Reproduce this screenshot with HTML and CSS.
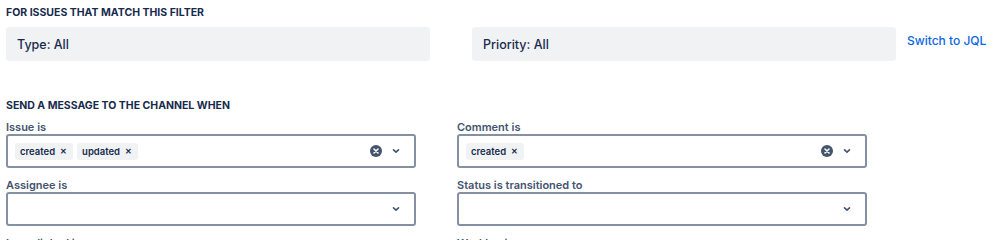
FILE: index.html
```html
<!DOCTYPE html>
<html lang="en">
<head>
    <meta charset="UTF-8">
    <meta name="viewport" content="width=device-width, initial-scale=1.0">
    <title>Channel notifications</title>
    <link rel="stylesheet" href="styles.css">
</head>
<body>
    <!-- Filter section -->
    <h4 class="section-title">For issues that match this filter</h4>
    <div class="filter-row">
        <div class="filter-box">Type: All</div>
        <div class="filter-box">Priority: All</div>
        <a class="jql-link" href="#">Switch to JQL</a>
    </div>

    <!-- Events section -->
    <h4 class="section-title section-gap">Send a message to the channel when</h4>
    <div class="field-grid">
        <div class="field">
            <label>Issue is</label>
            <div class="select">
                <div class="chips">
                    <span class="chip">created <span class="chip-x">&#x2715;</span></span>
                    <span class="chip">updated <span class="chip-x">&#x2715;</span></span>
                </div>
                <span class="clear-icon">
                    <svg width="12" height="12" viewBox="0 0 12 12"><circle cx="6" cy="6" r="6" fill="#44546F"/><path d="M4 4l4 4M8 4l-4 4" stroke="#fff" stroke-width="1.6" stroke-linecap="round"/></svg>
                </span>
                <span class="chevron">
                    <svg width="10" height="10" viewBox="0 0 10 10"><path d="M2.5 3.8L5 6.2l2.5-2.4" fill="none" stroke="#44546F" stroke-width="1.6" stroke-linecap="round" stroke-linejoin="round"/></svg>
                </span>
            </div>
        </div>
        <div class="field">
            <label>Comment is</label>
            <div class="select">
                <div class="chips">
                    <span class="chip">created <span class="chip-x">&#x2715;</span></span>
                </div>
                <span class="clear-icon">
                    <svg width="12" height="12" viewBox="0 0 12 12"><circle cx="6" cy="6" r="6" fill="#44546F"/><path d="M4 4l4 4M8 4l-4 4" stroke="#fff" stroke-width="1.6" stroke-linecap="round"/></svg>
                </span>
                <span class="chevron">
                    <svg width="10" height="10" viewBox="0 0 10 10"><path d="M2.5 3.8L5 6.2l2.5-2.4" fill="none" stroke="#44546F" stroke-width="1.6" stroke-linecap="round" stroke-linejoin="round"/></svg>
                </span>
            </div>
        </div>
        <div class="field">
            <label>Assignee is</label>
            <div class="select">
                <div class="chips"></div>
                <span class="chevron">
                    <svg width="10" height="10" viewBox="0 0 10 10"><path d="M2.5 3.8L5 6.2l2.5-2.4" fill="none" stroke="#44546F" stroke-width="1.6" stroke-linecap="round" stroke-linejoin="round"/></svg>
                </span>
            </div>
        </div>
        <div class="field">
            <label>Status is transitioned to</label>
            <div class="select">
                <div class="chips"></div>
                <span class="chevron">
                    <svg width="10" height="10" viewBox="0 0 10 10"><path d="M2.5 3.8L5 6.2l2.5-2.4" fill="none" stroke="#44546F" stroke-width="1.6" stroke-linecap="round" stroke-linejoin="round"/></svg>
                </span>
            </div>
        </div>
        <div class="field">
            <label>Issue linked is</label>
        </div>
        <div class="field">
            <label>Worklog is</label>
        </div>
    </div>
</body>
</html>
```

FILE: styles.css
```css
body {
    font-family: 'Inter', 'Noto Sans', sans-serif;
    color: #172B4D;
    background-color: #fff;
    margin: 0;
    padding: 0 6px;
}

.section-title {
    margin: 5px 0 6px;
    font-size: 10.5px;
    line-height: 16px;
    font-weight: 700;
    text-transform: uppercase;
    color: #172B4D;
}

.section-gap {
    margin-top: 37px;
    margin-bottom: 0;
}

.filter-row {
    display: flex;
    align-items: flex-start;
    gap: 42px;
}

.filter-box {
    flex-shrink: 0;
    width: 424px;
    height: 34px;
    box-sizing: border-box;
    padding: 0 11px;
    display: flex;
    align-items: center;
    background-color: #F1F2F4;
    border-radius: 3px;
    font-size: 12.5px;
    font-weight: 500;
}

.jql-link {
    margin-left: -31px;
    margin-top: 6px;
    white-space: nowrap;
    font-size: 12px;
    font-weight: 500;
    color: #0C66E4;
    text-decoration: none;
}

.field-grid {
    display: grid;
    grid-template-columns: 410px 410px;
    column-gap: 41px;
}

.field {
    margin-top: 10px;
}

.field:nth-child(-n+2) {
    margin-top: 6px;
}

.field label {
    display: block;
    font-size: 11px;
    line-height: 14px;
    font-weight: 600;
    color: #44546F;
}

.select {
    height: 34px;
    box-sizing: border-box;
    border: 2px solid #8590A2;
    border-radius: 3px;
    display: flex;
    align-items: center;
    padding: 0 13px 0 7px;
}

.chips {
    flex: 1;
    display: flex;
    gap: 4px;
}

.chip {
    display: inline-flex;
    align-items: center;
    height: 17px;
    padding: 0 6px 0 5px;
    background-color: #F1F2F4;
    border-radius: 3px;
    font-size: 9.5px;
    font-weight: 600;
    color: #172B4D;
}

.chip-x {
    margin-left: 5px;
    font-size: 8px;
    font-weight: 700;
}

.clear-icon {
    display: flex;
    margin-right: 9px;
}

.chevron {
    display: flex;
}
```
